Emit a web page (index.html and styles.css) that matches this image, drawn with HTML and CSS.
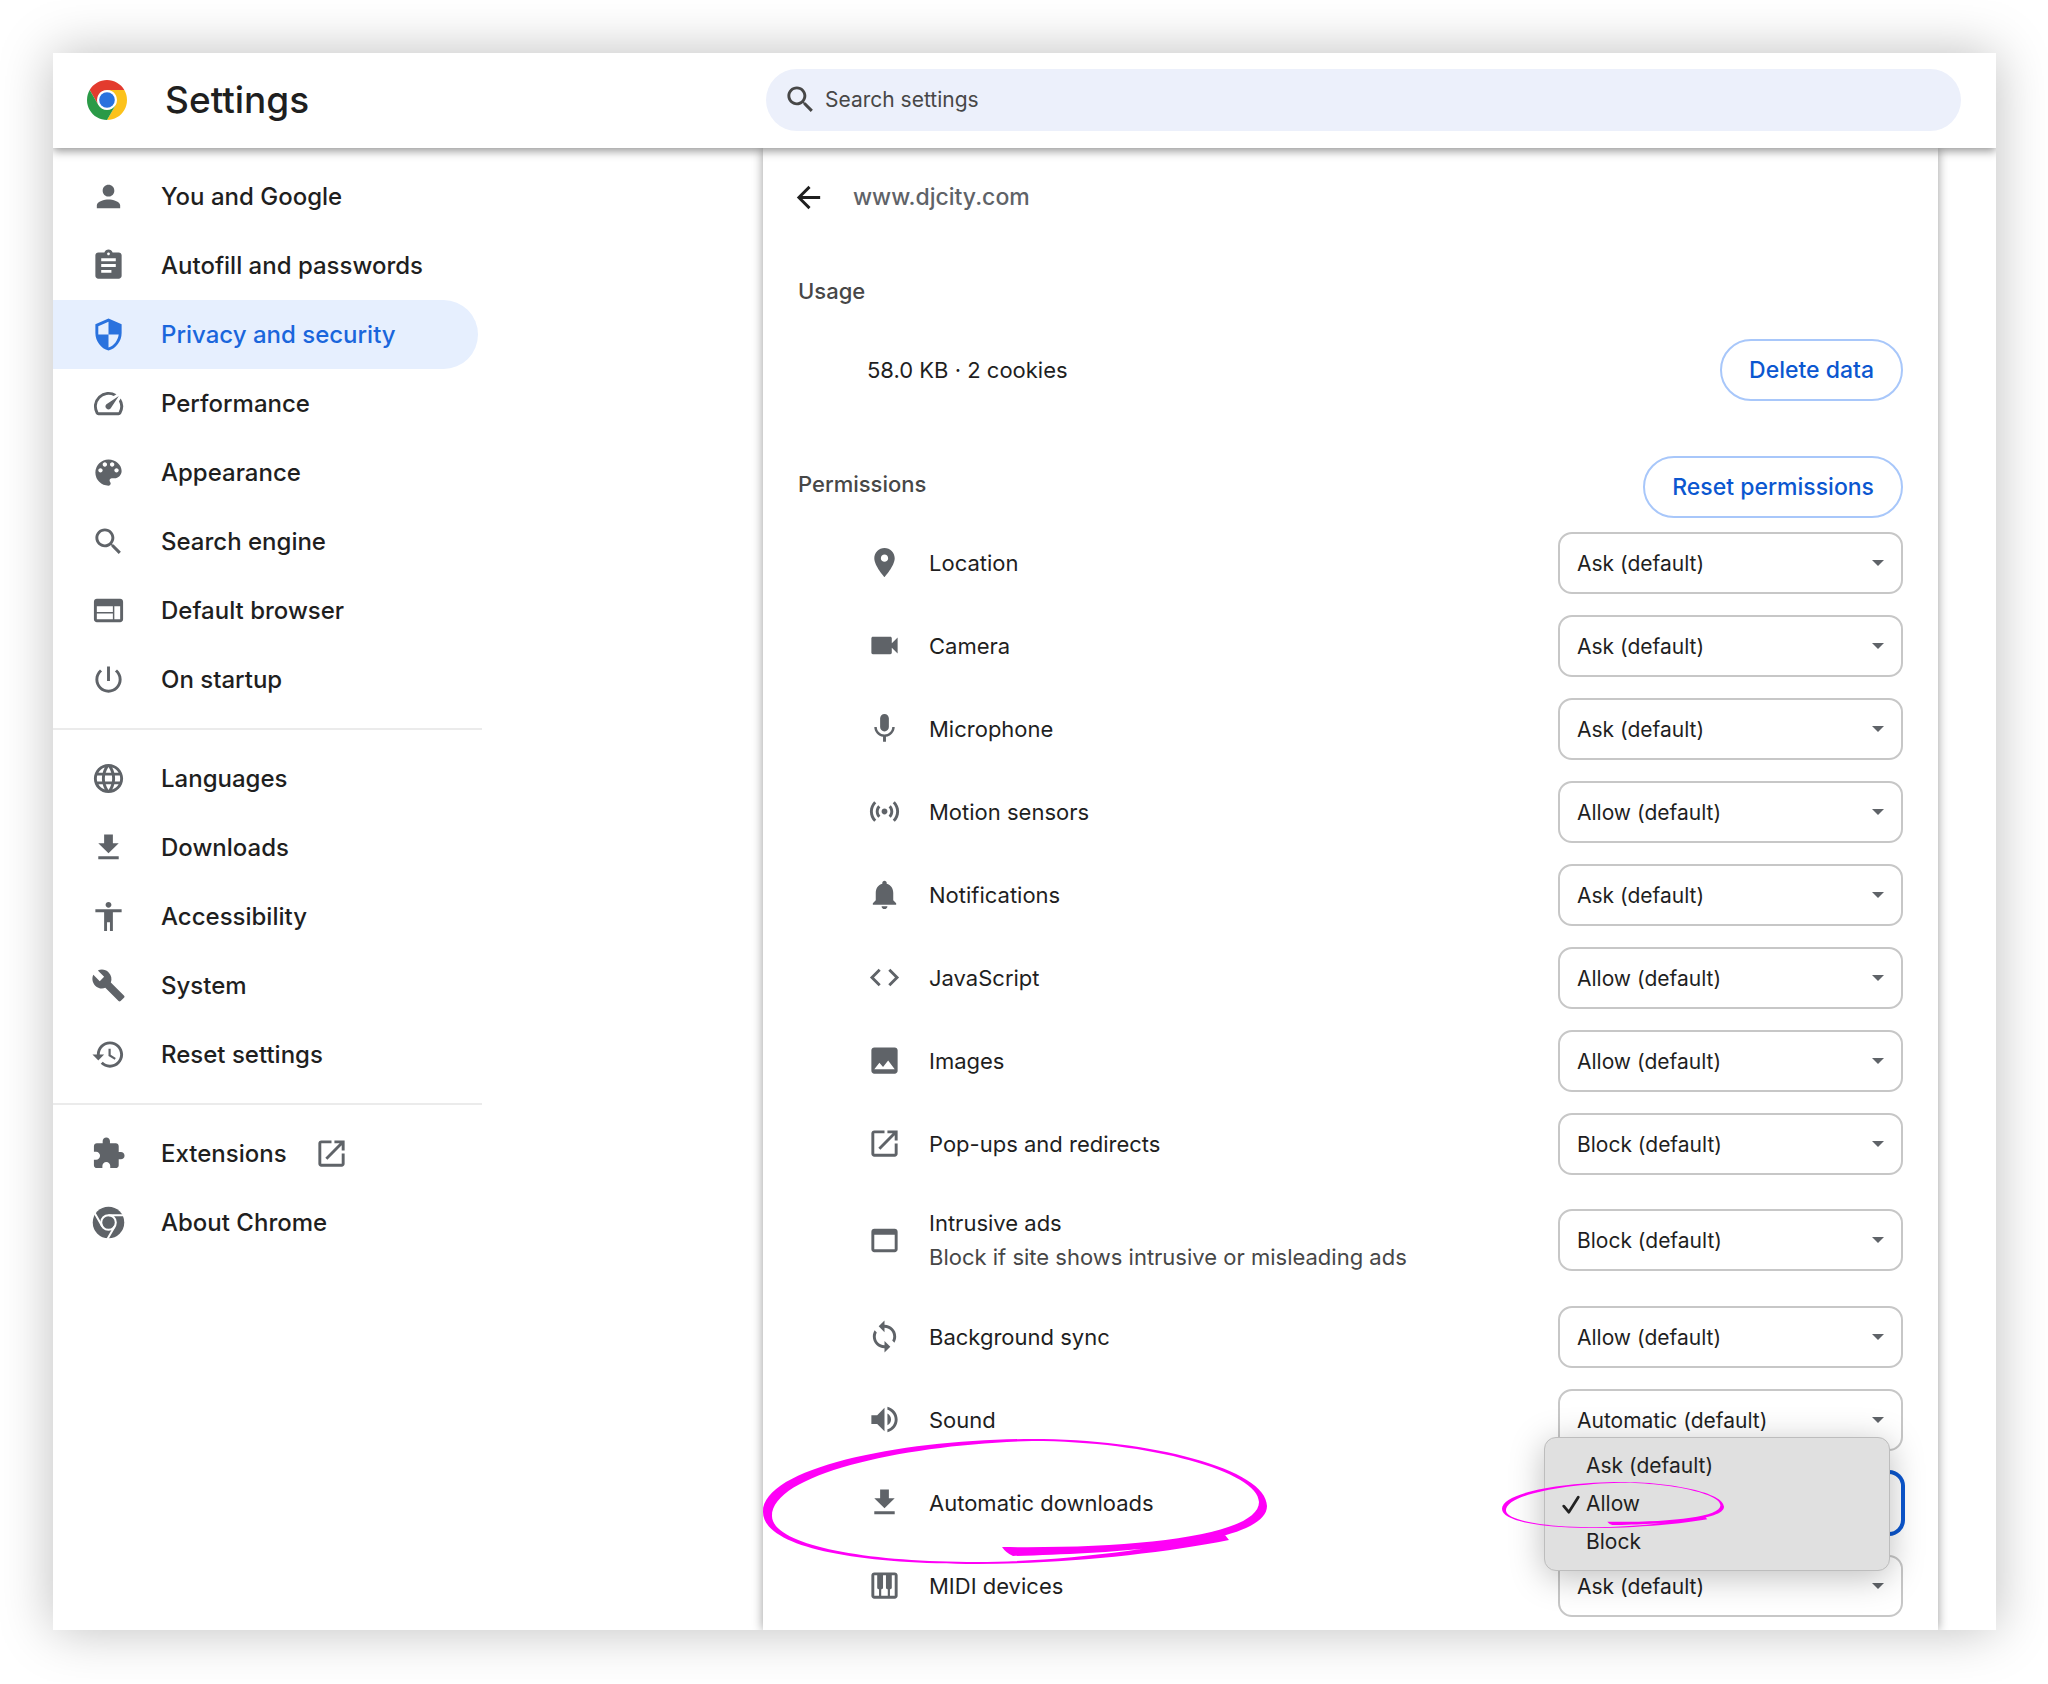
FILE: index.html
```html
<!DOCTYPE html>
<html lang="en">
<head>
    <meta charset="UTF-8">
    <meta name="viewport" content="width=device-width, initial-scale=1.0">
    <title>Settings</title>
    <link rel="stylesheet" href="styles.css">
</head>
<body>

    <!-- icons -->
    <svg class="sprite" aria-hidden="true">
        <symbol id="i-person" viewBox="0 0 24 24"><path d="M12 12c2.21 0 4-1.79 4-4s-1.79-4-4-4-4 1.79-4 4 1.79 4 4 4zm0 2c-2.67 0-8 1.34-8 4v2h16v-2c0-2.66-5.33-4-8-4z"/></symbol>
        <symbol id="i-assignment" viewBox="0 0 24 24"><path d="M19 3h-4.18C14.4 1.84 13.3 1 12 1c-1.3 0-2.4.84-2.82 2H5c-1.1 0-2 .9-2 2v14c0 1.1.9 2 2 2h14c1.1 0 2-.9 2-2V5c0-1.1-.9-2-2-2zm-7 0c.55 0 1 .45 1 1s-.45 1-1 1-1-.45-1-1 .45-1 1-1zm2 14H7v-2h7v2zm3-4H7v-2h10v2zm0-4H7V7h10v2z"/></symbol>
        <symbol id="i-security" viewBox="0 0 24 24"><path d="M12 1L3 5v6c0 5.55 3.84 10.74 9 12 5.16-1.26 9-6.45 9-12V5l-9-4zm0 10.99h7c-.53 4.12-3.28 7.79-7 8.94V12H5V6.3l7-3.11v8.8z"/></symbol>
        <symbol id="i-speed" viewBox="0 0 24 24"><path d="M20.38 8.57l-1.23 1.85a8 8 0 0 1-.22 7.58H5.07A8 8 0 0 1 15.58 6.85l1.85-1.23A10 10 0 0 0 3.35 19a2 2 0 0 0 1.72 1h13.85a2 2 0 0 0 1.74-1 10 10 0 0 0-.27-10.44zm-9.79 6.84a2 2 0 0 0 2.83 0l5.66-8.49-8.49 5.66a2 2 0 0 0 0 2.83z"/></symbol>
        <symbol id="i-palette" viewBox="0 0 24 24"><path d="M12 3a9 9 0 0 0 0 18c.83 0 1.5-.67 1.5-1.5 0-.39-.15-.74-.39-1.01-.23-.26-.38-.61-.38-.99 0-.83.67-1.5 1.5-1.5H16c2.76 0 5-2.24 5-5 0-4.42-4.03-8-9-8zm-5.5 9c-.83 0-1.5-.67-1.5-1.5S5.67 9 6.5 9 8 9.67 8 10.5 7.33 12 6.5 12zm3-4C8.67 8 8 7.33 8 6.5S8.67 5 9.5 5s1.5.67 1.5 1.5S10.33 8 9.5 8zm5 0c-.83 0-1.5-.67-1.5-1.5S13.67 5 14.5 5s1.5.67 1.5 1.5S15.33 8 14.5 8zm3 4c-.83 0-1.5-.67-1.5-1.5S16.67 9 17.5 9s1.5.67 1.5 1.5-.67 1.5-1.5 1.5z"/></symbol>
        <symbol id="i-search" viewBox="0 0 24 24"><path d="M15.5 14h-.79l-.28-.27C15.41 12.59 16 11.11 16 9.5 16 5.91 13.09 3 9.5 3S3 5.91 3 9.5 5.91 16 9.5 16c1.61 0 3.09-.59 4.23-1.57l.27.28v.79l5 4.99L20.49 19l-4.99-5zm-6 0C7.01 14 5 11.99 5 9.5S7.01 5 9.5 5 14 7.01 14 9.5 11.99 14 9.5 14z"/></symbol>
        <symbol id="i-web" viewBox="0 0 24 24"><path d="M20 4H4c-1.1 0-1.99.9-1.99 2L2 18c0 1.1.9 2 2 2h16c1.1 0 2-.9 2-2V6c0-1.1-.9-2-2-2zm-5 14H4v-4h11v4zm0-5H4V9h11v4zm5 5h-4V9h4v9z"/></symbol>
        <symbol id="i-power" viewBox="0 0 24 24"><path d="M13 3h-2v10h2V3zm4.83 2.17l-1.42 1.42C17.99 7.86 19 9.81 19 12c0 3.87-3.13 7-7 7s-7-3.13-7-7c0-2.19 1.01-4.14 2.58-5.42L6.17 5.17C4.23 6.82 3 9.26 3 12c0 4.97 4.03 9 9 9s9-4.03 9-9c0-2.74-1.23-5.18-3.17-6.83z"/></symbol>
        <symbol id="i-globe" viewBox="0 0 24 24"><path d="M11.99 2C6.47 2 2 6.48 2 12s4.47 10 9.99 10C17.52 22 22 17.52 22 12S17.52 2 11.99 2zm6.93 6h-2.95c-.32-1.25-.78-2.45-1.38-3.56 1.84.63 3.37 1.91 4.33 3.56zM12 4.04c.83 1.2 1.48 2.53 1.91 3.96h-3.82c.43-1.43 1.08-2.76 1.91-3.96zM4.26 14C4.1 13.36 4 12.69 4 12s.1-1.36.26-2h3.38c-.08.66-.14 1.32-.14 2 0 .68.06 1.34.14 2H4.26zm.82 2h2.95c.32 1.25.78 2.45 1.38 3.56-1.84-.63-3.37-1.9-4.33-3.56zm2.95-8H5.08c.96-1.66 2.49-2.93 4.33-3.56C8.81 5.55 8.35 6.75 8.03 8zM12 19.96c-.83-1.2-1.48-2.53-1.91-3.96h3.82c-.43 1.43-1.08 2.76-1.91 3.96zM14.34 14H9.66c-.09-.66-.16-1.32-.16-2 0-.68.07-1.35.16-2h4.68c.09.65.16 1.32.16 2 0 .68-.07 1.34-.16 2zm.25 5.56c.6-1.11 1.06-2.31 1.38-3.56h2.95c-.96 1.65-2.49 2.93-4.33 3.56zM16.36 14c.08-.66.14-1.32.14-2 0-.68-.06-1.34-.14-2h3.38c.16.64.26 1.31.26 2s-.1 1.36-.26 2h-3.38z"/></symbol>
        <symbol id="i-download" viewBox="0 0 24 24"><path d="M19 9h-4V3H9v6H5l7 7 7-7zM5 18v2h14v-2H5z"/></symbol>
        <symbol id="i-accessibility" viewBox="0 0 24 24"><path d="M12 2c1.1 0 2 .9 2 2s-.9 2-2 2-2-.9-2-2 .9-2 2-2zm9 7h-6v13h-2v-6h-2v6H9V9H3V7h18v2z"/></symbol>
        <symbol id="i-build" viewBox="0 0 24 24"><path d="M22.7 19l-9.1-9.1c.9-2.3.4-5-1.5-6.9-2-2-5-2.4-7.4-1.3L9 6 6 9 1.6 4.7C.4 7.1.9 10.1 2.9 12.1c1.9 1.9 4.6 2.4 6.9 1.5l9.1 9.1c.4.4 1 .4 1.4 0l2.3-2.3c.5-.4.5-1.1.1-1.4z"/></symbol>
        <symbol id="i-history" viewBox="0 0 24 24"><path d="M13 3c-4.97 0-9 4.03-9 9H1l3.89 3.89.07.14L9 12H6c0-3.87 3.13-7 7-7s7 3.13 7 7-3.13 7-7 7c-1.93 0-3.68-.79-4.94-2.06l-1.42 1.42C8.27 19.99 10.51 21 13 21c4.97 0 9-4.03 9-9s-4.03-9-9-9zm-1 5v5l4.28 2.54.72-1.21-3.5-2.08V8H12z"/></symbol>
        <symbol id="i-extension" viewBox="0 0 24 24"><path d="M20.5 11H19V7c0-1.1-.9-2-2-2h-4V3.5C13 2.12 11.88 1 10.5 1S8 2.12 8 3.5V5H4c-1.1 0-1.99.9-1.99 2v3.8H3.5c1.49 0 2.7 1.21 2.7 2.7s-1.21 2.7-2.7 2.7H2V20c0 1.1.9 2 2 2h3.8v-1.5c0-1.49 1.21-2.7 2.7-2.7 1.49 0 2.7 1.21 2.7 2.7V22H17c1.1 0 2-.9 2-2v-4h1.5c1.38 0 2.5-1.12 2.5-2.5S21.88 11 20.5 11z"/></symbol>
        <symbol id="i-open" viewBox="0 0 24 24"><path d="M19 19H5V5h7V3H5c-1.11 0-2 .9-2 2v14c0 1.1.89 2 2 2h14c1.1 0 2-.9 2-2v-7h-2v7zM14 3v2h3.59l-9.83 9.83 1.41 1.41L19 6.41V10h2V3h-7z"/></symbol>
        <symbol id="i-chrome" viewBox="0 0 24 24">
            <circle cx="12" cy="12" r="10.8"/>
            <circle cx="12" cy="12" r="5" fill="none" stroke="#fff" stroke-width="1.4"/>
            <path d="M12 7H23M16.33 14.5L10.8 24.1M7.67 14.5L2.2 5" fill="none" stroke="#fff" stroke-width="1.4"/>
        </symbol>
        <symbol id="i-back" viewBox="0 0 24 24"><path d="M20 11H7.83l5.59-5.59L12 4l-8 8 8 8 1.41-1.41L7.83 13H20v-2z"/></symbol>
        <symbol id="i-place" viewBox="0 0 24 24"><path d="M12 2C8.13 2 5 5.13 5 9c0 5.25 7 13 7 13s7-7.75 7-13c0-3.87-3.13-7-7-7zm0 9.5c-1.38 0-2.5-1.12-2.5-2.5s1.12-2.5 2.5-2.5 2.5 1.12 2.5 2.5-1.12 2.5-2.5 2.5z"/></symbol>
        <symbol id="i-videocam" viewBox="0 0 24 24"><path d="M17 10.5V7c0-.55-.45-1-1-1H4c-.55 0-1 .45-1 1v10c0 .55.45 1 1 1h12c.55 0 1-.45 1-1v-3.5l4 4v-11l-4 4z"/></symbol>
        <symbol id="i-mic" viewBox="0 0 24 24"><path d="M12 14c1.66 0 2.99-1.34 2.99-3L15 5c0-1.66-1.34-3-3-3S9 3.34 9 5v6c0 1.66 1.34 3 3 3zm5.3-3c0 3-2.54 5.1-5.3 5.1S6.7 14 6.7 11H5c0 3.41 2.72 6.23 6 6.72V21h2v-3.28c3.28-.48 6-3.3 6-6.72h-1.7z"/></symbol>
        <symbol id="i-sensors" viewBox="0 0 24 24"><path d="M7.76 16.24C6.67 15.16 6 13.66 6 12s.67-3.16 1.76-4.24l1.42 1.42C8.45 9.9 8 10.9 8 12c0 1.1.45 2.1 1.17 2.83l-1.41 1.41zm8.48 0C17.33 15.16 18 13.66 18 12s-.67-3.16-1.76-4.24l-1.42 1.42C15.55 9.9 16 10.9 16 12c0 1.1-.45 2.1-1.17 2.83l1.41 1.41zM12 10c-1.1 0-2 .9-2 2s.9 2 2 2 2-.9 2-2-.9-2-2-2zm8 2c0 2.21-.9 4.21-2.35 5.65l1.42 1.42C20.88 17.26 22 14.76 22 12s-1.12-5.26-2.93-7.07l-1.42 1.42C19.1 7.79 20 9.79 20 12zM6.35 6.35L4.93 4.93C3.12 6.74 2 9.24 2 12s1.12 5.26 2.93 7.07l1.42-1.42C4.9 16.21 4 14.21 4 12s.9-4.21 2.35-5.65z"/></symbol>
        <symbol id="i-bell" viewBox="0 0 24 24"><path d="M12 22c1.1 0 2-.9 2-2h-4c0 1.1.89 2 2 2zm6-6v-5c0-3.07-1.64-5.64-4.5-6.32V4c0-.83-.67-1.5-1.5-1.5s-1.5.67-1.5 1.5v.68C7.63 5.36 6 7.92 6 11v5l-2 2v1h16v-1l-2-2z"/></symbol>
        <symbol id="i-code" viewBox="0 0 24 24"><path d="M9.4 16.6L4.8 12l4.6-4.6L8 6l-6 6 6 6 1.4-1.4zm5.2 0l4.6-4.6-4.6-4.6L16 6l6 6-6 6-1.4-1.4z"/></symbol>
        <symbol id="i-image" viewBox="0 0 24 24"><path d="M21 19V5c0-1.1-.9-2-2-2H5c-1.1 0-2 .9-2 2v14c0 1.1.9 2 2 2h14c1.1 0 2-.9 2-2zM8.5 13.5l2.5 3.01L14.5 12l4.5 6H5l3.5-4.5z"/></symbol>
        <symbol id="i-window" viewBox="0 0 24 24"><path d="M19 4H5c-1.11 0-2 .9-2 2v12c0 1.1.89 2 2 2h14c1.1 0 2-.9 2-2V6c0-1.1-.9-2-2-2zm0 14H5V8h14v10z"/></symbol>
        <symbol id="i-sync" viewBox="0 0 24 24"><path d="M12 4V1L8 5l4 4V6c3.31 0 6 2.69 6 6 0 1.01-.25 1.97-.7 2.8l1.46 1.46C19.54 15.03 20 13.57 20 12c0-4.42-3.58-8-8-8zm0 14c-3.31 0-6-2.69-6-6 0-1.01.25-1.97.7-2.8L5.24 7.74C4.46 8.97 4 10.43 4 12c0 4.42 3.58 8 8 8v3l4-4-4-4v3z"/></symbol>
        <symbol id="i-volume" viewBox="0 0 24 24"><path d="M3 9v6h4l5 5V4L7 9H3zm13.5 3c0-1.77-1.02-3.29-2.5-4.03v8.05c1.48-.73 2.5-2.25 2.5-4.02zM14 3.23v2.06c2.89.86 5 3.54 5 6.71s-2.11 5.85-5 6.71v2.06c4.01-.91 7-4.49 7-8.77s-2.99-7.86-7-8.77z"/></symbol>
        <symbol id="i-piano" viewBox="0 0 24 24"><path d="M19 3H5c-1.1 0-2 .9-2 2v14c0 1.1.9 2 2 2h14c1.1 0 2-.9 2-2V5c0-1.1-.9-2-2-2zm-5 11.5h.25V19h-4.5v-4.5H10c.55 0 1-.45 1-1V5h2v8.5c0 .55.45 1 1 1zM5 5h2v8.5c0 .55.45 1 1 1h.25V19H5V5zm14 14h-3.25v-4.5H16c.55 0 1-.45 1-1V5h2v14z"/></symbol>
        <symbol id="i-check" viewBox="0 0 16 18"><path d="M1.5 10L6 15.5 14.5 2" fill="none" stroke="#222" stroke-width="2.5" stroke-linecap="round" stroke-linejoin="round"/></symbol>
        <symbol id="i-marker" viewBox="3 3 504 125" preserveAspectRatio="none"><path d="M242 111C380 113 499 99 499 66C499 36 390 5 272 5C150 8 12 37 12 80C12 108 100 126 217 126C300 126 400 112 465 99L469 104C400 118 300 128 217 128C90 128 3 110 3 76C3 30 150 3 272 3C390 3 507 33 507 70C507 107 370 117 253 120Q246 117 242 111Z"/></symbol>
    </svg>

    <div class="window">
        <header class="toolbar">
            <div class="brand">
                <svg class="logo" viewBox="0 0 48 48" aria-hidden="true">
                    <circle cx="24" cy="24" r="14" fill="#fff"/>
                    <path fill="#e33b2e" d="M24 12H44.78A24 24 0 0 0 3.22 12L13.61 30A12 12 0 0 1 24 12z"/>
                    <path fill="#fcc21b" d="M34.39 30L24 48A24 24 0 0 0 44.78 12H24A12 12 0 0 1 34.39 30z"/>
                    <path fill="#2a9a47" d="M13.61 30L3.22 12A24 24 0 0 0 24 48L34.39 30A12 12 0 0 1 13.61 30z"/>
                    <circle cx="24" cy="24" r="9.4" fill="#2a72de"/>
                </svg>
                <h1>Settings</h1>
            </div>
            <label class="search">
                <svg class="icon"><use href="#i-search"/></svg>
                <input type="text" placeholder="Search settings" aria-label="Search settings">
            </label>
        </header>

        <div class="content">
            <nav class="sidebar">
                <a href="#"><svg class="icon"><use href="#i-person"/></svg>You and Google</a>
                <a href="#"><svg class="icon"><use href="#i-assignment"/></svg>Autofill and passwords</a>
                <a href="#" class="selected"><svg class="icon"><use href="#i-security"/></svg>Privacy and security</a>
                <a href="#"><svg class="icon"><use href="#i-speed"/></svg>Performance</a>
                <a href="#"><svg class="icon"><use href="#i-palette"/></svg>Appearance</a>
                <a href="#"><svg class="icon"><use href="#i-search"/></svg>Search engine</a>
                <a href="#"><svg class="icon"><use href="#i-web"/></svg>Default browser</a>
                <a href="#"><svg class="icon"><use href="#i-power"/></svg>On startup</a>
                <hr>
                <a href="#"><svg class="icon"><use href="#i-globe"/></svg>Languages</a>
                <a href="#"><svg class="icon"><use href="#i-download"/></svg>Downloads</a>
                <a href="#"><svg class="icon"><use href="#i-accessibility"/></svg>Accessibility</a>
                <a href="#"><svg class="icon"><use href="#i-build"/></svg>System</a>
                <a href="#"><svg class="icon"><use href="#i-history"/></svg>Reset settings</a>
                <hr>
                <a href="#"><svg class="icon"><use href="#i-extension"/></svg>Extensions<svg class="icon external"><use href="#i-open"/></svg></a>
                <a href="#"><svg class="icon"><use href="#i-chrome"/></svg>About Chrome</a>
            </nav>

            <main class="card">
                <div class="subpage">
                    <button type="button" class="back" aria-label="Back"><svg class="icon"><use href="#i-back"/></svg></button>
                    <h2>www.djcity.com</h2>
                </div>

                <h3 class="usage-title">Usage</h3>
                <div class="usage">
                    <span>58.0 KB · 2 cookies</span>
                    <button type="button" class="pill">Delete data</button>
                </div>

                <div class="permissions-title">
                    <h3>Permissions</h3>
                    <button type="button" class="pill">Reset permissions</button>
                </div>

                <div class="row">
                    <svg class="icon"><use href="#i-place"/></svg>
                    <label for="location">Location</label>
                    <div class="control"><select id="location"><option>Ask (default)</option><option>Allow</option><option>Block</option></select></div>
                </div>
                <div class="row">
                    <svg class="icon"><use href="#i-videocam"/></svg>
                    <label for="camera">Camera</label>
                    <div class="control"><select id="camera"><option>Ask (default)</option><option>Allow</option><option>Block</option></select></div>
                </div>
                <div class="row">
                    <svg class="icon"><use href="#i-mic"/></svg>
                    <label for="microphone">Microphone</label>
                    <div class="control"><select id="microphone"><option>Ask (default)</option><option>Allow</option><option>Block</option></select></div>
                </div>
                <div class="row">
                    <svg class="icon"><use href="#i-sensors"/></svg>
                    <label for="motion">Motion sensors</label>
                    <div class="control"><select id="motion"><option>Allow (default)</option><option>Allow</option><option>Block</option></select></div>
                </div>
                <div class="row">
                    <svg class="icon"><use href="#i-bell"/></svg>
                    <label for="notifications">Notifications</label>
                    <div class="control"><select id="notifications"><option>Ask (default)</option><option>Allow</option><option>Block</option></select></div>
                </div>
                <div class="row">
                    <svg class="icon"><use href="#i-code"/></svg>
                    <label for="javascript">JavaScript</label>
                    <div class="control"><select id="javascript"><option>Allow (default)</option><option>Allow</option><option>Block</option></select></div>
                </div>
                <div class="row">
                    <svg class="icon"><use href="#i-image"/></svg>
                    <label for="images">Images</label>
                    <div class="control"><select id="images"><option>Allow (default)</option><option>Allow</option><option>Block</option></select></div>
                </div>
                <div class="row">
                    <svg class="icon"><use href="#i-open"/></svg>
                    <label for="popups">Pop-ups and redirects</label>
                    <div class="control"><select id="popups"><option>Block (default)</option><option>Allow</option><option>Block</option></select></div>
                </div>
                <div class="row two-line">
                    <svg class="icon"><use href="#i-window"/></svg>
                    <label for="ads">Intrusive ads<small>Block if site shows intrusive or misleading ads</small></label>
                    <div class="control"><select id="ads"><option>Block (default)</option><option>Allow</option><option>Block</option></select></div>
                </div>
                <div class="row">
                    <svg class="icon"><use href="#i-sync"/></svg>
                    <label for="sync">Background sync</label>
                    <div class="control"><select id="sync"><option>Allow (default)</option><option>Allow</option><option>Block</option></select></div>
                </div>
                <div class="row">
                    <svg class="icon"><use href="#i-volume"/></svg>
                    <label for="sound">Sound</label>
                    <div class="control"><select id="sound"><option>Automatic (default)</option><option>Allow</option><option>Mute</option></select></div>
                </div>
                <div class="row open">
                    <svg class="icon"><use href="#i-download"/></svg>
                    <label for="downloads">Automatic downloads</label>
                    <div class="control">
                        <select id="downloads"><option>Ask (default)</option><option selected>Allow</option><option>Block</option></select>
                        <ul class="menu" role="listbox" aria-label="Automatic downloads">
                            <li role="option">Ask (default)</li>
                            <li role="option" aria-selected="true"><svg class="check"><use href="#i-check"/></svg>Allow</li>
                            <li role="option">Block</li>
                        </ul>
                        <svg class="marker marker-small"><use href="#i-marker"/></svg>
                    </div>
                    <svg class="marker marker-big"><use href="#i-marker"/></svg>
                </div>
                <div class="row">
                    <svg class="icon"><use href="#i-piano"/></svg>
                    <label for="midi">MIDI devices</label>
                    <div class="control"><select id="midi"><option>Ask (default)</option><option>Allow</option><option>Block</option></select></div>
                </div>
            </main>
        </div>
    </div>

</body>
</html>
```

FILE: styles.css
```css
* {
    margin: 0;
    padding: 0;
    box-sizing: border-box;
}
body {
    padding: 53px 52px 53px 53px;
    background: #fff;
    color: #1f1f1f;
    font-family: Inter, "Liberation Sans", sans-serif;
    font-size: 22px;
    line-height: 34px;
}
button, input, select {
    font: inherit;
    color: inherit;
}
h1, h2, h3 {
    font-weight: 500;
}
.sprite {
    position: absolute;
    width: 0;
    height: 0;
}
.icon {
    flex: none;
    width: 35px;
    height: 35px;
    fill: #5f6368;
}
.window {
    background: #fff;
    box-shadow: 0 0 50px rgba(0, 0, 0, 0.26);
}

/* toolbar */
.toolbar {
    display: flex;
    align-items: center;
    height: 95px;
    padding: 0 35px 2px 0;
    position: relative;
    z-index: 2;
    background: #fff;
    box-shadow: 0 3px 9px rgba(0, 0, 0, 0.42);
    clip-path: inset(0 0 -14px 0);
}
.brand {
    display: flex;
    align-items: center;
    gap: 38px;
    flex: 0 0 713px;
    padding-left: 34px;
}
.logo {
    width: 40px;
    height: 40px;
}
h1 {
    font-size: 37px;
    line-height: 44px;
}
.search {
    display: flex;
    align-items: center;
    flex: 1;
    height: 62px;
    padding: 0 17px;
    gap: 7px;
    border-radius: 31px;
    background: #ecf0fb;
}
.search .icon {
    fill: #474747;
}
.search input {
    flex: 1;
    border: 0;
    outline: 0;
    background: none;
    font-size: 21px;
}
.search input::placeholder {
    color: #474747;
    opacity: 1;
}

/* side menu */
.content {
    display: flex;
}
.sidebar {
    flex: 0 0 429px;
    padding-top: 14px;
}
.sidebar a {
    display: flex;
    align-items: center;
    gap: 35px;
    height: 69px;
    margin-right: 4px;
    padding-left: 38px;
    color: #1f1f1f;
    font-size: 24px;
    font-weight: 500;
    text-decoration: none;
}
.sidebar .selected {
    border-radius: 0 35px 35px 0;
    background: #e6effe;
    color: #1a66dc;
}
.sidebar .selected .icon {
    fill: #2a72de;
}
.sidebar .external {
    margin-left: -8px;
}
.sidebar hr {
    height: 2px;
    margin: 14px 0;
    border: 0;
    background: #ebebeb;
}

/* site details */
.card {
    flex: 1;
    margin: 0 58px 0 281px;
    padding-bottom: 3px;
    box-shadow: 0 0 10px rgba(0, 0, 0, 0.4);
    clip-path: inset(0 -14px);
}
.subpage {
    display: flex;
    align-items: center;
    gap: 27px;
    height: 98px;
    padding-left: 28px;
}
.back {
    display: flex;
    border: 0;
    background: none;
}
.back .icon {
    fill: #1f1f1f;
}
h2 {
    color: #5f6368;
    font-size: 23px;
}
h3 {
    color: #474747;
    font-size: 22px;
}
.usage-title {
    padding: 28px 35px;
}
.usage {
    display: flex;
    align-items: center;
    justify-content: space-between;
    height: 68px;
    padding: 0 35px 0 104px;
}
.permissions-title {
    display: flex;
    justify-content: space-between;
    padding: 52px 35px 3px;
}
.permissions-title h3 {
    padding-top: 11px;
}
.pill {
    height: 62px;
    padding: 0 27px;
    border: 2px solid #a8c7fa;
    border-radius: 31px;
    background: #fff;
    color: #0b57d0;
    font-size: 23px;
    font-weight: 500;
}
.row {
    display: flex;
    align-items: center;
    position: relative;
    height: 83px;
    padding: 0 35px 0 104px;
}
.row.two-line {
    height: 110px;
}
.row label {
    flex: 1;
    padding-left: 27px;
}
.row small {
    display: block;
    color: #474747;
    font-size: 22px;
}
.control {
    position: relative;
    flex: 0 0 345px;
}
.control::after {
    content: "";
    position: absolute;
    top: 28px;
    right: 19px;
    border: 6px solid transparent;
    border-top-color: #5f6368;
    border-bottom: 0;
    pointer-events: none;
}
select {
    display: block;
    width: 100%;
    height: 62px;
    padding: 2px 17px 0;
    border: 2px solid #c7c7c7;
    border-radius: 14px;
    appearance: none;
    background: #fff;
    font-size: 21px;
}

/* opened drop-down */
.open {
    z-index: 1;
}
.open select {
    border-color: #0b57d0;
    box-shadow: 0 0 0 2px #0b57d0;
}
.menu {
    position: absolute;
    top: -35px;
    left: -14px;
    z-index: 1;
    width: 346px;
    padding: 9px 0;
    border: 1px solid #bdbdbd;
    border-radius: 12px;
    background: #e0e0e0;
    box-shadow: 0 6px 34px rgba(0, 0, 0, 0.26);
    font-size: 21px;
    line-height: 38px;
    list-style: none;
}
.menu li {
    position: relative;
    padding-left: 41px;
}
.check {
    position: absolute;
    top: 10px;
    left: 17px;
    width: 18px;
    height: 20px;
}

/* hand drawn circles */
.marker {
    position: absolute;
    z-index: 2;
    fill: #ff00f7;
    pointer-events: none;
}
.marker-big {
    top: -22px;
    left: 0;
    width: 504px;
    height: 125px;
}
.marker-small {
    top: 10px;
    left: -56px;
    width: 222px;
    height: 46px;
}
```
